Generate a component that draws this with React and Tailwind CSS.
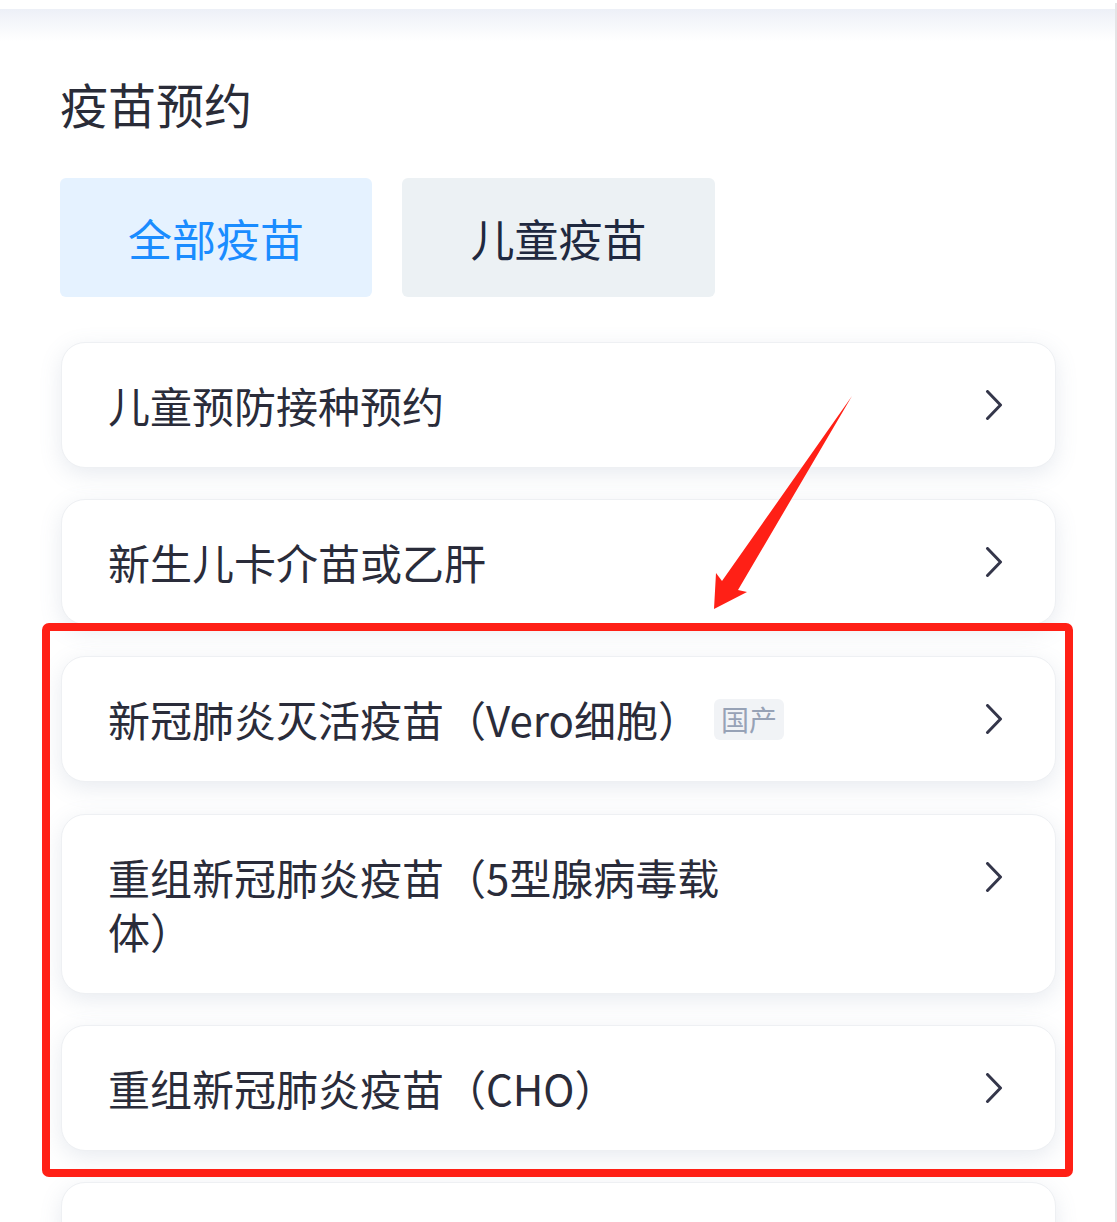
import React from "react";

const items = [
  { text: "儿童预防接种预约" },
  { text: "新生儿卡介苗或乙肝" },
  { text: "新冠肺炎灭活疫苗（Vero细胞）", tag: "国产" },
  { text: "重组新冠肺炎疫苗（5型腺病毒载体）" },
  { text: "重组新冠肺炎疫苗（CHO）" },
  { text: "" },
];

function Chevron() {
  return (
    <svg width="18" height="30" viewBox="0 0 18 30" fill="none">
      <polyline
        points="2.5,1.5 15.5,15 2.5,28.5"
        stroke="#34364a"
        strokeWidth="3"
        strokeLinecap="round"
        strokeLinejoin="round"
      />
    </svg>
  );
}

export default function App() {
  return (
    <div
      className="relative w-[1117px] h-[1222px] overflow-hidden bg-white"
      style={{ fontFamily: '"Noto Sans CJK SC", "Noto Sans", sans-serif' }}
    >
      <div className="flex">
        <div className="flex-1">
          <div className="h-[9px] bg-white" />
          <div className="h-[32px] bg-linear-to-b from-[#edf0f7] to-white" />
          <div className="pl-[60px]">
            <h1 className="mt-[38px] text-[48px] leading-[48px] text-[#2a2c38] font-normal">
              疫苗预约
            </h1>
            <div className="mt-[51px] flex gap-[30px]">
              <div className="w-[312px] h-[119px] rounded-[6px] bg-[#e5f2ff] flex items-center justify-center text-[44px] text-[#1a8cff]">
                全部疫苗
              </div>
              <div className="w-[313px] h-[119px] rounded-[6px] bg-[#ecf1f4] flex items-center justify-center text-[44px] text-[#1f2940]">
                儿童疫苗
              </div>
            </div>
            <div className="mt-[45px] ml-[1px] w-[995px] flex flex-col gap-[31.2px]">
              {items.map((it, i) => (
                <div
                  key={i}
                  className="rounded-[24px] bg-white border border-[#eef0f3] shadow-[0_6px_22px_rgba(110,130,160,0.16)] pl-[46px] pr-[52px] py-[35px] flex items-start"
                >
                  <div className="flex-1 flex items-center min-h-[54px]">
                    {it.text && (
                      <span className="max-w-[640px] text-[42px] leading-[54px] text-[#2a2c3a]">
                        {it.text}
                      </span>
                    )}
                    {it.tag && (
                      <span className="ml-[14px] h-[41px] px-[7px] rounded-[6px] bg-[#f1f3f6] text-[28px] leading-[41px] text-[#97a2b6]">
                        {it.tag}
                      </span>
                    )}
                  </div>
                  {it.text && (
                    <div className="h-[54px] flex items-center">
                      <Chevron />
                    </div>
                  )}
                </div>
              ))}
            </div>
          </div>
        </div>
        <div className="w-[2px] mt-[3px] h-[1219px] bg-[#e4e4e6]" />
      </div>

      {/* red annotation box */}
      <div className="absolute left-[42px] top-[623px] w-[1031px] h-[554px] border-[8px] border-[#ff2016] rounded-[7px]" />

      {/* red arrow */}
      <svg
        className="absolute left-0 top-0"
        width="1117"
        height="1222"
        viewBox="0 0 1117 1222"
        fill="none"
      >
        <polygon
          points="852,396 738,590 747,592 714,609 716,573 722,581"
          fill="#ff2016"
        />
      </svg>
    </div>
  );
}
